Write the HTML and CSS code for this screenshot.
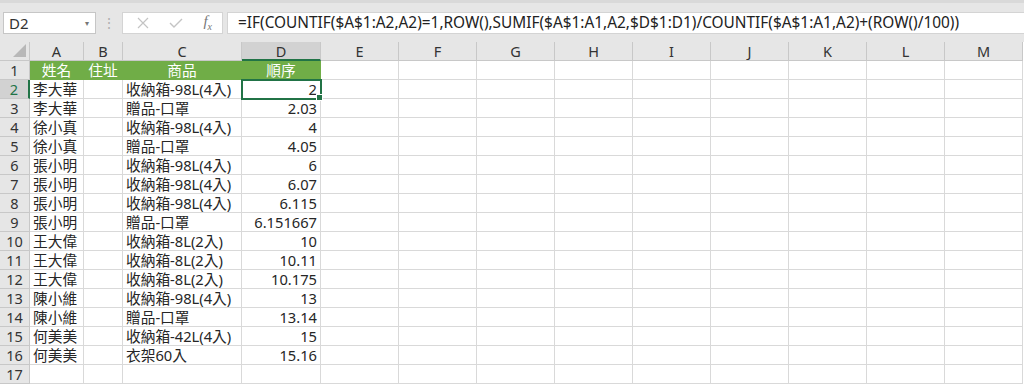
FILE: index.html
```html
<!DOCTYPE html>
<html lang="zh-Hant">

<head>
    <meta charset="UTF-8">
    <title>順序 - 工作表</title>
    <link rel="stylesheet" href="styles.css">
</head>

<body>
    <div class="formula-bar">
        <div class="name-box">
            <span>D2</span>
            <span class="caret">&#9662;</span>
        </div>
        <div class="grip">&#8942;</div>
        <div class="fx-box">
            <svg width="12" height="12" viewBox="0 0 12 12"><path d="M1 1L11 11M11 1L1 11" stroke="#c4c4c4" stroke-width="1.2" fill="none"/></svg>
            <svg width="14" height="12" viewBox="0 0 14 12"><path d="M1 6L5 10L13 2" stroke="#c4c4c4" stroke-width="1.4" fill="none"/></svg>
            <span class="fx">f<sub>x</sub></span>
        </div>
        <div class="formula">=IF(COUNTIF($A$1:A2,A2)=1,ROW(),SUMIF($A$1:A1,A2,$D$1:D1)/COUNTIF($A$1:A1,A2)+(ROW()/100))</div>
    </div>

    <div class="sheet" id="sheet"></div>

    <script>
        const cols = ['A', 'B', 'C', 'D', 'E', 'F', 'G', 'H', 'I', 'J', 'K', 'L', 'M'];
        const rows = [
            ['姓名', '住址', '商品', '順序'],
            ['李大華', '', '收納箱-98L(4入)', '2'],
            ['李大華', '', '贈品-口罩', '2.03'],
            ['徐小真', '', '收納箱-98L(4入)', '4'],
            ['徐小真', '', '贈品-口罩', '4.05'],
            ['張小明', '', '收納箱-98L(4入)', '6'],
            ['張小明', '', '收納箱-98L(4入)', '6.07'],
            ['張小明', '', '收納箱-98L(4入)', '6.115'],
            ['張小明', '', '贈品-口罩', '6.151667'],
            ['王大偉', '', '收納箱-8L(2入)', '10'],
            ['王大偉', '', '收納箱-8L(2入)', '10.11'],
            ['王大偉', '', '收納箱-8L(2入)', '10.175'],
            ['陳小維', '', '收納箱-98L(4入)', '13'],
            ['陳小維', '', '贈品-口罩', '13.14'],
            ['何美美', '', '收納箱-42L(4入)', '15'],
            ['何美美', '', '衣架60入', '15.16'],
            ['', '', '', '']
        ];

        const sheet = document.getElementById('sheet');

        function addCell(cls, text) {
            const div = document.createElement('div');
            div.className = cls;
            div.textContent = text || '';
            sheet.appendChild(div);
        }

        // 欄標題
        addCell('corner');
        cols.forEach(c => addCell(c === 'D' ? 'col-head selected' : 'col-head', c));

        rows.forEach((row, i) => {
            const n = i + 1;
            addCell(n === 2 ? 'row-head selected' : 'row-head', String(n));
            cols.forEach((c, j) => {
                let cls = 'cell';
                if (n === 1 && j < 4) cls += ' title';
                if (j === 3 && n > 1) cls += ' num';
                if (n === 2 && j === 3) cls += ' active';
                addCell(cls, row[j]);
            });
        });
    </script>
</body>

</html>
```

FILE: styles.css
```css
body {
    margin: 0;
    background-color: #ffffff;
    font-family: "Noto Sans", "Noto Sans CJK TC", sans-serif;
    color: #262626;
    overflow: hidden;
}

.formula-bar {
    display: flex;
    align-items: center;
    height: 42px;
    padding: 0 0 0 3px;
    background-color: #e6e6e6;
    border-top: 3px solid #d9d9d9;
    box-sizing: border-box;
}

.name-box {
    display: flex;
    align-items: center;
    justify-content: space-between;
    width: 93px;
    height: 22px;
    padding: 0 6px 0 5px;
    background-color: white;
    border: 1px solid #c6c6c6;
    box-sizing: border-box;
    font-size: 15px;
    color: #333;
}

.caret {
    font-size: 8px;
    color: #777;
}

.grip {
    width: 26px;
    text-align: center;
    color: #b0b0b0;
    font-size: 14px;
}

.fx-box {
    display: flex;
    align-items: center;
    justify-content: space-between;
    width: 101px;
    height: 22px;
    padding: 0 10px 0 14px;
    background-color: white;
    border: 1px solid #d4d4d4;
    box-sizing: border-box;
}

.fx {
    font-family: "Liberation Serif", serif;
    font-style: italic;
    font-size: 15px;
    color: #777;
}

.fx sub {
    font-size: 10px;
}

.formula {
    flex-grow: 1;
    height: 22px;
    margin-left: 4px;
    padding-left: 10px;
    background-color: white;
    border: 1px solid #d4d4d4;
    border-right: none;
    box-sizing: border-box;
    font-size: 15.4px;
    line-height: 20px;
    color: #222;
    white-space: nowrap;
}

.sheet {
    display: grid;
    grid-template-columns: 30px 54px 39px 119px 79px repeat(9, 78px);
    grid-template-rows: 19px;
    grid-auto-rows: 19px;
}

.sheet > div {
    box-sizing: border-box;
    white-space: nowrap;
    overflow: hidden;
}

.corner {
    position: relative;
    background-color: #e6e6e6;
    border-right: 1px solid #c8c8c8;
    border-bottom: 1px solid #c8c8c8;
}

.corner::after {
    content: "";
    position: absolute;
    right: 3px;
    bottom: 3px;
    border-left: 13px solid transparent;
    border-bottom: 13px solid #b8b8b8;
}

.col-head {
    background-color: #e6e6e6;
    border-right: 1px solid #c8c8c8;
    border-bottom: 1px solid #c8c8c8;
    text-align: center;
    font-size: 14.5px;
    line-height: 19px;
    color: #333;
}

.col-head.selected {
    background-color: #d2d2d2;
    border-bottom: 2px solid #217346;
}

.row-head {
    background-color: #e6e6e6;
    border-right: 1px solid #c8c8c8;
    border-bottom: 1px solid #c8c8c8;
    text-align: center;
    font-size: 14.5px;
    line-height: 18px;
    color: #333;
}

.row-head.selected {
    background-color: #d2d2d2;
    border-right: 2px solid #217346;
    color: #217346;
}

.cell {
    border-right: 1px solid #d9d9d9;
    border-bottom: 1px solid #d9d9d9;
    padding: 0 3px;
    font-size: 14.7px;
    line-height: 18px;
}

.cell.title {
    background-color: #70ad47;
    border-color: #70ad47;
    color: white;
    text-align: center;
}

.cell.num {
    text-align: right;
}

.cell.active {
    position: relative;
    overflow: visible;
    outline: 2px solid #217346;
    outline-offset: -1px;
}

.cell.active::after {
    content: "";
    position: absolute;
    right: -3px;
    bottom: -3px;
    width: 5px;
    height: 5px;
    background-color: #217346;
    border: 1px solid white;
}
```
